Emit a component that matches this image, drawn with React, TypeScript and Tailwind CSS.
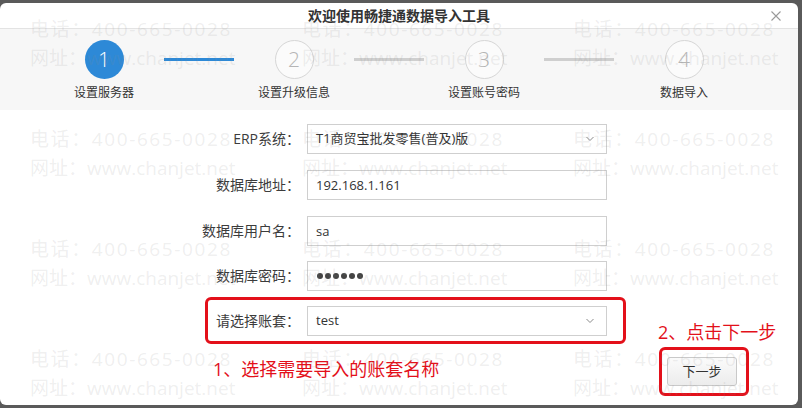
import React from 'react';

const FONT = "font-['Open_Sans','Noto_Sans_CJK_SC',sans-serif]";

type Step = { num: number; label: string; active?: boolean };

const steps: Step[] = [
  { num: 1, label: '设置服务器', active: true },
  { num: 2, label: '设置升级信息' },
  { num: 3, label: '设置账号密码' },
  { num: 4, label: '数据导入' },
];

// connector width between step columns (columns are 100px wide)
const gaps = ['w-[90px]', 'w-[90px]', 'w-[100px]'];

const Chevron = () => (
  <svg width="8" height="5" viewBox="0 0 8 5" className="absolute right-[12px] top-1/2 -translate-y-1/2">
    <path d="M0.5 0.5 L4 4 L7.5 0.5" fill="none" stroke="#8a8a8a" strokeWidth="1" />
  </svg>
);

const Field: React.FC<{ label: string; className?: string; children: React.ReactNode }> = ({ label, className = '', children }) => (
  <div className={`flex items-center ${className}`}>
    <div className="w-[300px] text-right text-[14px] leading-[30px] text-[#3c3c3c]">{label}</div>
    <div className="relative ml-[7px] h-[30px] w-[300px] border border-[#cfcfcf] bg-white">{children}</div>
  </div>
);

const inputCls = `h-full w-full bg-transparent pl-[8px] text-[13px] text-[#333] outline-none ${FONT}`;

const Watermark = () => (
  <div className="pointer-events-none absolute inset-0 z-20 overflow-hidden">
    <div className="grid grid-cols-[272px_271px_230px] pl-[30px] pt-[12px]">
      {Array.from({ length: 12 }).map((_, i) => (
        <div key={i} className="h-[110px] text-[19px] leading-[29px] text-[rgba(140,140,140,0.15)] whitespace-nowrap">
          <div className="tracking-[1.6px]">电话：400-665-0028</div>
          <div>网址：www.chanjet.net</div>
        </div>
      ))}
    </div>
  </div>
);

export default function App() {
  return (
    <div className={`h-[408px] w-[802px] bg-[#5a5a5a] pt-[3px] ${FONT}`}>
      <div className="relative h-[402px] w-[798px] overflow-hidden rounded-[6px] bg-white">
        {/* title bar */}
        <div className="relative flex h-[26px] items-center justify-center border-b border-[#e3e3e3]">
          <span className="text-[14px] font-semibold text-[#333]">欢迎使用畅捷通数据导入工具</span>
          <svg width="10" height="10" viewBox="0 0 10 10" className="absolute left-[771px] top-[8px]">
            <path d="M0.5 0.5 L9.5 9.5 M9.5 0.5 L0.5 9.5" stroke="#9a9a9a" strokeWidth="1.1" />
          </svg>
        </div>

        {/* steps */}
        <div className="flex h-[81px] items-start bg-[#f7f7f7] pl-[54px] pt-[11px]">
          {steps.map((s, idx) => (
            <React.Fragment key={s.num}>
              <div className="flex w-[100px] flex-col items-center">
                <div
                  className={
                    s.active
                      ? 'flex h-[39px] w-[39px] items-center justify-center rounded-full bg-[#2d89d7] text-[21px] font-light text-white'
                      : 'flex h-[39px] w-[39px] items-center justify-center rounded-full border border-[#d6d6d6] bg-[#fbfbfb] text-[21px] font-light text-[#b5b5b5]'
                  }
                >
                  {s.num}
                </div>
                <div className="mt-[6px] text-[12px] leading-[16px] text-[#333]">{s.label}</div>
              </div>
              {idx < gaps.length && (
                <div className={`flex h-[39px] items-center pl-[10px] ${gaps[idx]}`}>
                  <div className={`h-[3px] w-[70px] ${idx === 0 ? 'bg-[#2d89d7]' : 'bg-[#cfcfcf]'}`} />
                </div>
              )}
            </React.Fragment>
          ))}
        </div>

        {/* form */}
        <div className="pt-[14px]">
          <Field label="ERP系统：">
            <div className="flex h-full items-center pl-[8px] text-[13px] text-[#333]">T1商贸宝批发零售(普及)版</div>
            <Chevron />
          </Field>
          <Field label="数据库地址：" className="mt-[16px]">
            <input className={inputCls} defaultValue="192.168.1.161" readOnly />
          </Field>
          <Field label="数据库用户名：" className="mt-[16px]">
            <input className={inputCls} defaultValue="sa" readOnly />
          </Field>
          <Field label="数据库密码：" className="mt-[15px]">
            <div className="flex h-full items-center gap-[2px] pl-[9px]">
              {Array.from({ length: 6 }).map((_, i) => (
                <span key={i} className="h-[6px] w-[6px] rounded-full bg-[#444]" />
              ))}
            </div>
          </Field>
          <div className="relative mt-[15px]">
            <Field label="请选择账套：">
              <div className="flex h-full items-center pl-[8px] text-[13px] text-[#333]">test</div>
              <Chevron />
            </Field>
            <div className="absolute left-[205px] top-[-9px] h-[47px] w-[421px] rounded-[6px] border-[3px] border-[#e3101a]" />
          </div>

          {/* footer */}
          <div className="mt-[21px] flex items-start">
            <div className="ml-[213px] text-[18px] leading-[24px] text-[#e3101a]">1、选择需要导入的账套名称</div>
            <div className="relative ml-auto mr-[61px]">
              <div className="absolute left-[-9px] top-[-37px] whitespace-nowrap text-[18px] leading-[24px] text-[#e3101a]">2、点击下一步</div>
              <button className="h-[29px] w-[70px] rounded-[3px] border border-[#c9c9c9] bg-gradient-to-b from-[#fbfbfb] to-[#ececec] text-[13px] text-[#333]">
                下一步
              </button>
              <div className="absolute left-[-8px] top-[-10px] h-[49px] w-[90px] rounded-[6px] border-[3px] border-[#e3101a]" />
            </div>
          </div>
        </div>

        <Watermark />
      </div>
    </div>
  );
}
